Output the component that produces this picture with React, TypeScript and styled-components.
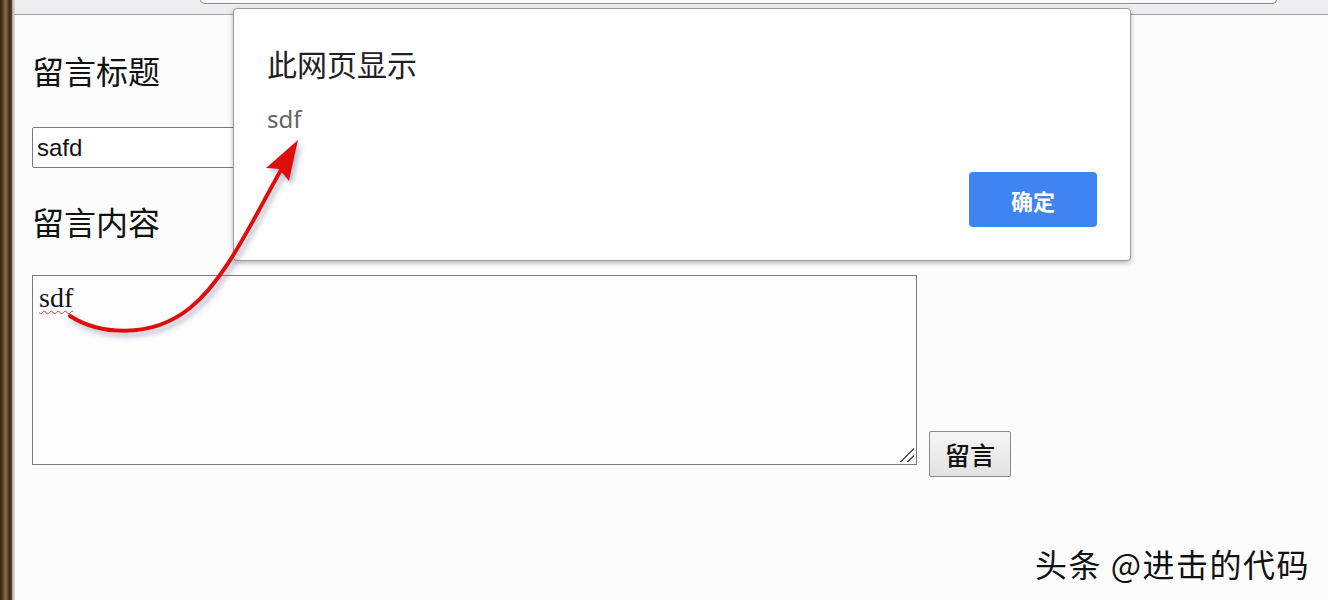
import React from "react";
import styled, { createGlobalStyle } from "styled-components";

const Global = createGlobalStyle`
  html, body { margin: 0; padding: 0; background: #fcfcfd; }
  body { width: 1328px; height: 600px; overflow: hidden; font-family: "Noto Sans CJK SC", "Noto Sans", sans-serif; }
`;

const Screen = styled.div`
  position: relative;
  display: flex;
  width: 1328px;
  height: 600px;
  overflow: hidden;
`;

const Wood = styled.div`
  width: 12px;
  flex: none;
  background: linear-gradient(90deg, #2e1f12 0%, #5a4128 25%, #8b6a42 45%, #6c5033 60%, #3b2a18 80%, #5c4429 100%);
`;

const Frame = styled.div`
  width: 3px;
  flex: none;
  background: linear-gradient(90deg, #a8a29a, #e4e4e4);
`;

const Window = styled.div`
  flex: 1;
  display: flex;
  flex-direction: column;
  background: #fcfcfd;
`;

const Chrome = styled.div`
  height: 14px;
  flex: none;
  background: #eeeef0;
  border-bottom: 1px solid #a4a4a6;
  display: flex;
  padding-left: 185px;
`;

const AddressBar = styled.div`
  width: 1075px;
  height: 4px;
  margin-top: -1px;
  background: #fafafa;
  border: 1px solid #8e8e90;
  border-top: none;
  border-radius: 0 0 5px 5px;
`;

const Page = styled.div`
  display: flex;
  flex-direction: column;
  align-items: flex-start;
  padding: 36px 0 0 17px;
`;

const Label = styled.div`
  font-family: "Noto Sans CJK SC", sans-serif;
  font-size: 32px;
  line-height: 38px;
  color: #111;
`;

const TitleInput = styled.div`
  margin-top: 38px;
  width: 420px;
  height: 39px;
  border: 1px solid #7a7a7a;
  border-radius: 2px;
  background: #fff;
  box-sizing: content-box;
  font-family: "Liberation Sans", Arial, sans-serif;
  font-size: 24px;
  line-height: 39px;
  padding-left: 4px;
  color: #111;
`;

const SecondLabel = styled(Label)`
  margin-top: 34px;
`;

const ContentRow = styled.div`
  margin-top: 35px;
  display: flex;
  align-items: flex-end;
  gap: 12px;
`;

const TextBox = styled.div`
  position: relative;
  width: 885px;
  height: 190px;
  margin-bottom: 12px;
  border: 1px solid #7a7a7a;
  background: #fdfdfe;
  padding: 7px 6px;
  box-sizing: border-box;
  font-family: "Liberation Serif", "Times New Roman", serif;
  font-size: 28px;
  line-height: 30px;
  color: #111;
`;

const Misspelled = styled.span`
  text-decoration: underline wavy #e03030;
  text-decoration-thickness: 1px;
  text-underline-offset: 3px;
  padding-right: 2px;
`;

const Grip = styled.div`
  position: absolute;
  right: 2px;
  bottom: 2px;
  width: 16px;
  height: 16px;
  background: linear-gradient(135deg, transparent 55%, #555 55%, #555 61%, transparent 61%, transparent 76%, #555 76%, #555 82%, transparent 82%);
`;

const SubmitButton = styled.button`
  width: 82px;
  height: 46px;
  padding: 0;
  border: 1px solid #8a8a8a;
  border-radius: 2px;
  background: linear-gradient(#f6f6f6, #e2e2e2);
  font-family: "Noto Sans CJK SC", sans-serif;
  font-weight: 500;
  font-size: 25px;
  color: #111;
`;

const Dialog = styled.div`
  position: absolute;
  left: 233px;
  top: 8px;
  width: 898px;
  height: 253px;
  box-sizing: border-box;
  background: #fefefe;
  border: 1px solid #9c9c9c;
  border-radius: 4px;
  box-shadow: 0 2px 5px rgba(0, 0, 0, 0.28);
  display: flex;
  flex-direction: column;
  padding: 34px 33px 33px 33px;
`;

const DialogTitle = styled.div`
  font-family: "Noto Sans CJK SC", sans-serif;
  font-size: 30px;
  line-height: 40px;
  color: #202124;
`;

const DialogMessage = styled.div`
  margin-top: 22px;
  font-family: "Noto Sans", Roboto, sans-serif;
  font-size: 24px;
  line-height: 28px;
  color: #5f6368;
`;

const DialogFooter = styled.div`
  margin-top: auto;
  display: flex;
  justify-content: flex-end;
`;

const OkButton = styled.button`
  width: 128px;
  height: 55px;
  border: none;
  border-radius: 4px;
  background: #3f84f2;
  color: #fff;
  font-family: "Noto Sans CJK SC", sans-serif;
  font-weight: 700;
  font-size: 22px;
`;

const Arrow = styled.svg`
  position: absolute;
  left: 0;
  top: 0;
  pointer-events: none;
`;

const Watermark = styled.div`
  position: absolute;
  right: 18px;
  bottom: 16px;
  font-family: "Noto Sans CJK SC", sans-serif;
  font-size: 32px;
  line-height: 42px;
  color: #111;
  text-shadow: 1px 1px 0 #fff, -1px -1px 0 rgba(255,255,255,0.8);
  letter-spacing: 1.5px;
`;

export default function App() {
  return (
    <>
      <Global />
      <Screen>
        <Wood />
        <Frame />
        <Window>
          <Chrome>
            <AddressBar />
          </Chrome>
          <Page>
            <Label>留言标题</Label>
            <TitleInput>safd</TitleInput>
            <SecondLabel>留言内容</SecondLabel>
            <ContentRow>
              <TextBox>
                <Misspelled>sdf</Misspelled>
                <Grip />
              </TextBox>
              <SubmitButton>留言</SubmitButton>
            </ContentRow>
          </Page>
        </Window>
        <Dialog>
          <DialogTitle>此网页显示</DialogTitle>
          <DialogMessage>sdf</DialogMessage>
          <DialogFooter>
            <OkButton>确定</OkButton>
          </DialogFooter>
        </Dialog>
        <Arrow width="1328" height="600" viewBox="0 0 1328 600">
          <defs>
            <filter id="sh" x="-20%" y="-20%" width="140%" height="140%">
              <feDropShadow dx="3" dy="4" stdDeviation="2.5" floodColor="#6a7090" floodOpacity="0.45" />
            </filter>
          </defs>
          <g filter="url(#sh)">
            <path
              d="M70 316 C 98 334, 150 340, 190 308 C 225 280, 250 225, 281 170"
              fill="none"
              stroke="#e00c0c"
              strokeWidth="4"
              strokeLinecap="round"
            />
            <path d="M298 140 L266 168 L279 169 L289 181 Z" fill="#e00c0c" />
          </g>
        </Arrow>
        <Watermark>头条 @进击的代码</Watermark>
      </Screen>
    </>
  );
}
